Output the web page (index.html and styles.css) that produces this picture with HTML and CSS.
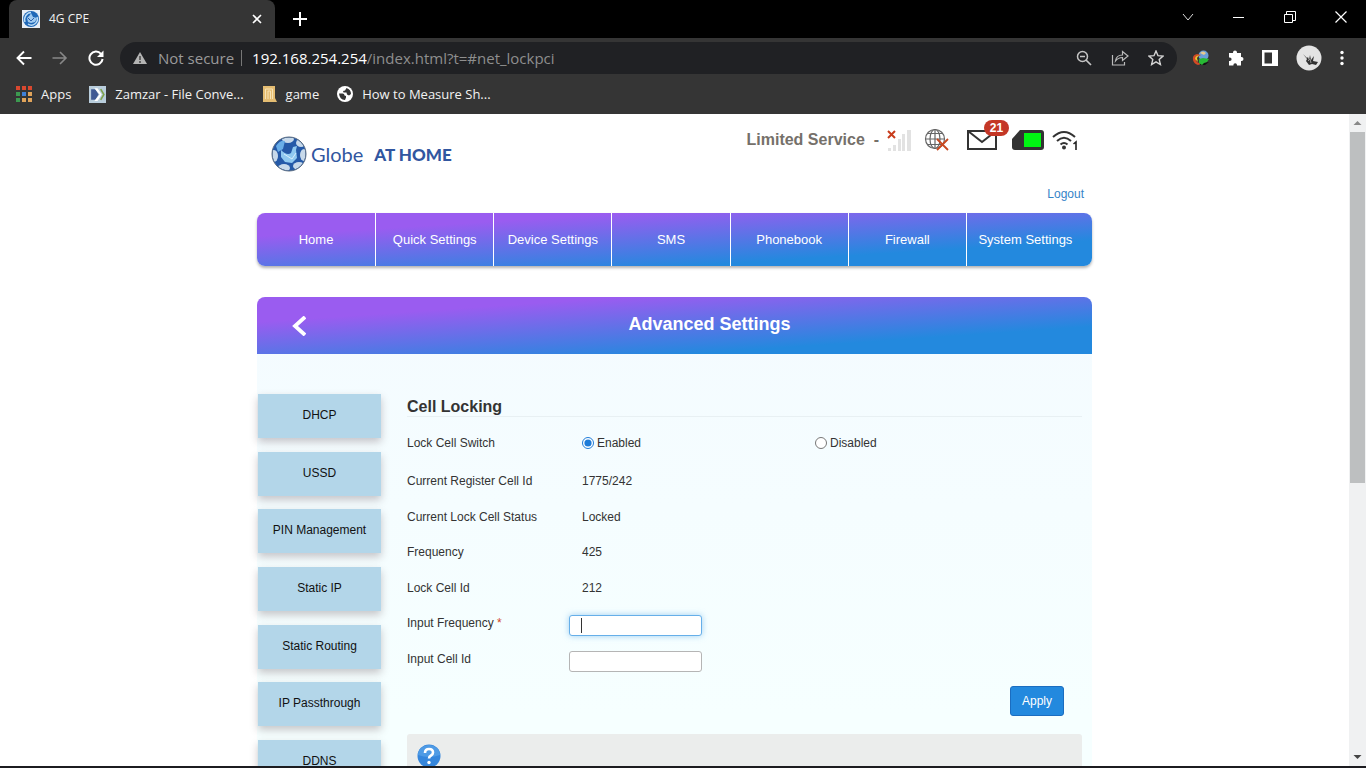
FILE: index.html
```
<!DOCTYPE html>
<html lang="en">
<head>
<meta charset="utf-8">
<title>4G CPE</title>
<link rel="stylesheet" href="styles.css">
</head>
<body>
<header class="browser">
  <div class="tabstrip">
    <div class="tab">
      <svg class="favicon" viewBox="0 0 18 18" width="18" height="18"><path fill="#e8eef5" d="M0 0h18v18H0z"/><circle cx="9" cy="9" r="8" fill="#1f68b8"/><path d="M3 12A7 7 0 0 1 9 2.500M15 7a6 6 0 0 1-9 7" fill="none" stroke="#bcdcf5" stroke-width="1.500"/><path fill="#9fc9ef" d="M5 8l3-3 1-2 2 4 4 1-2 4-4 1-3-1z"/><path d="M6 8l3 3 3-3" stroke="#2c5fa8" fill="none"/></svg>
      <span class="tab-title">4G CPE</span>
      <button class="plain" aria-label="Close tab"><svg viewBox="0 0 12 12" width="12" height="12"><path d="M2 2l8 8M10 2l-8 8" stroke="#fff" stroke-width="1.600"/></svg></button>
    </div>
    <button class="plain new-tab" aria-label="New tab"><svg viewBox="0 0 14 14" width="14" height="14"><path d="M7 0v14M0 7h14" stroke="#fff" stroke-width="2"/></svg></button>
    <div class="window-buttons">
      <button class="plain" aria-label="Search tabs"><svg viewBox="0 0 12 12" width="12" height="12"><path d="M1 3l5 6 5-6" fill="none" stroke="#ddd"/></svg></button>
      <button class="plain" aria-label="Minimize"><svg viewBox="0 0 12 12" width="12" height="12"><path d="M0 6.500h11" stroke="#fff"/></svg></button>
      <button class="plain" aria-label="Restore"><svg viewBox="0 0 12 12" width="12" height="12"><path d="M.5 3.500h8v8h-8zM2.500 3V.5h9v9H9" fill="none" stroke="#fff"/></svg></button>
      <button class="plain" aria-label="Close"><svg viewBox="0 0 12 12" width="12" height="12"><path d="M.5.5l11 11M11.500.5l-11 11" stroke="#fff" stroke-width="1.200"/></svg></button>
    </div>
  </div>
  <div class="toolbar">
    <div class="nav-buttons">
      <button class="plain" aria-label="Back"><svg viewBox="0 0 16 16" width="16" height="16"><path d="M15.500 8H2M8 1.500L1.500 8 8 14.500" fill="none" stroke="#fff" stroke-width="1.900"/></svg></button>
      <button class="plain" aria-label="Forward"><svg viewBox="0 0 16 16" width="16" height="16"><path d="M.5 8H14M8 2l6 6-6 6" fill="none" stroke="#888" stroke-width="1.600"/></svg></button>
      <button class="plain" aria-label="Reload"><svg viewBox="0 0 16 16" width="16" height="16"><path d="M13 3.800A6.600 6.600 0 1 0 14.600 9" fill="none" stroke="#fff" stroke-width="2"/><path d="M15.500.5V7H9z" fill="#fff"/></svg></button>
    </div>
    <div class="omnibox">
      <svg viewBox="0 0 14 12" width="14" height="12"><path d="M7 0l7 12H0z" fill="#b4b4b4"/><path d="M7 4v4M7 9v2" stroke="#333" stroke-width="1.300"/></svg>
      <span class="not-secure">Not secure</span>
      <div class="url" role="textbox" aria-label="Address" tabindex="0"><span class="host">192.168.254.254</span>/index.html?t=#net_lockpci</div>
      <div class="omni-actions">
        <button class="plain" aria-label="Zoom"><svg viewBox="0 0 16 16" width="16" height="16"><circle cx="6.500" cy="6.500" r="5" fill="none" stroke="#c4c4c4" stroke-width="1.500"/><path d="M4 6.500h5M10 10l5 5" stroke="#c4c4c4" stroke-width="1.700"/></svg></button>
        <button class="plain" aria-label="Share"><svg viewBox="0 0 18 16" width="18" height="16"><path d="M1.500 5v10h12v-3M4.500 11c.5-4 3-6 7-6V1.500L17 6l-5.500 4.500V7.500c-3 0-5 1-7 3.500z" fill="none" stroke="#bbb" stroke-width="1.200"/></svg></button>
        <button class="plain" aria-label="Bookmark"><svg viewBox="0 0 16 16" width="16" height="16"><path d="M8 1l2 4.700 5 .4-3.800 3.400 1.200 5L8 11.800 3.600 14.500l1.200-5L1 6.100l5-.4z" fill="none" stroke="#d4d4d4" stroke-width="1.400"/></svg></button>
      </div>
    </div>
    <div class="extensions">
      <button class="plain" aria-label="Download manager"><svg viewBox="0 0 18 16" width="18" height="16"><circle cx="11.500" cy="5.500" r="5" fill="#6b9fd8"/><path d="M8 3q3-3 6 0l-2 2z" fill="#e8c98f"/><path d="M1 10q-1-5 4-6l4 1-4 2q-2 2 0 5l4 2-3 1q-4-1-5-5z" fill="#d34a25"/><path d="M3 9q0-3 4-4l-2 3 1 4z" fill="#e9c52d"/><path d="M9 13l8-1-4 3H8z" fill="#111"/><path d="M7 9l4-1 6 1-2 3-3 1-2 2-3-2z" fill="#27b934"/></svg></button>
      <button class="plain" aria-label="Extensions"><svg viewBox="0 0 16 16" width="16" height="16"><path d="M1 3h4V2.500a2 2 0 0 1 4 0V3h4v4h.5a2 2 0 0 1 0 4H13v4.500H9V15a1.800 1.800 0 0 0-3.600 0v.5H1V11h.8a1.800 1.800 0 0 0 0-3.600H1z" fill="#fff"/></svg></button>
      <button class="plain" aria-label="Side panel"><svg viewBox="0 0 16 16" width="16" height="16"><path fill="#fff" d="M0 0h16v16H0z"/><path fill="#333" d="M2.500 2.500H10v11H2.500z"/></svg></button>
      <button class="plain" aria-label="Profile"><svg viewBox="0 0 26 26" width="26" height="26"><circle cx="13" cy="13" r="12.500" fill="#e4e4e4"/><path d="M7 9l4 4 1-1 1 3 1-5 1 5 3-4-1 5 5 1-2 3-4-1-3 1-3-4 1-2z" fill="#333"/><path d="M12 16l2-2 1 4" stroke="#999" fill="none"/></svg></button>
      <button class="plain" aria-label="Menu"><svg viewBox="0 0 4 16" width="4" height="16"><g fill="#fff"><circle cx="2" cy="2.500" r="1.700"/><circle cx="2" cy="8" r="1.700"/><circle cx="2" cy="13.500" r="1.700"/></g></svg></button>
    </div>
  </div>
  <nav class="bookmarks" aria-label="Bookmarks">
    <a href="#"><svg viewBox="0 0 16 16" width="16" height="16"><path fill="#d9482f" d="M0 0h4v4H0zM6 0h4v4H6zM12 0h4v4h-4z"/><path fill="#3c9a50" d="M0 6h4v4H0zM0 12h4v4H0z"/><path fill="#3f80d8" d="M6 6h4v4H6z"/><path fill="#e0a35a" d="M12 6h4v4h-4zM6 12h4v4H6zM12 12h4v4h-4z"/></svg>Apps</a>
    <a href="#"><svg viewBox="0 0 16 16" width="17" height="17"><path fill="#b9cddc" d="M0 0h16v16H0z"/><path d="M2 3h4l3 5-3 5H2z" fill="#3f5a94"/><path d="M5 2l5 6-5 6h3l4-6-4-6z" fill="#fff"/><path d="M11 3l3 5-3 5" fill="none" stroke="#7fa34c" stroke-width="1.500"/></svg>Zamzar - File Conve...</a>
    <a href="#"><svg viewBox="0 0 15 16" width="15" height="16"><path fill="#e5bd72" d="M1 0h12v12l2 4H1z"/><path d="M3.500 13V3h7v10M6 13V5h2.500v8" fill="none" stroke="#f7e3b5"/></svg>game</a>
    <a href="#"><svg viewBox="0 0 16 16" width="16" height="16"><circle cx="8" cy="8" r="8" fill="#fff"/><path d="M2 7.500h3.500q2 0 2 2l1.500.5v1.500L8 14q-5.500-.5-6-6.500zM9.500 2q4.500 1.500 4.500 6l-2 1.500-2-1-.5-2H6.500L6 5l2-.5z" fill="#353535"/></svg>How to Measure Sh...</a>
  </nav>
</header>

<div class="viewport">
  <div class="page">
    <div class="container">
      <div class="masthead">
        <div class="brand">
          <svg viewBox="0 0 36 36" width="36" height="36"><defs><clipPath id="ball"><circle cx="18" cy="18" r="16.500"/></clipPath></defs><circle cx="18" cy="18" r="17" fill="#2459a8"/><g clip-path="url(#ball)"><g fill="#c7d9ea"><ellipse cx="17" cy="3" rx="6" ry="4"/><ellipse cx="30" cy="7" rx="5" ry="4"/><ellipse cx="33" cy="19" rx="4" ry="6"/><ellipse cx="28" cy="30" rx="6" ry="4"/><ellipse cx="13" cy="32" rx="6" ry="4"/><ellipse cx="3" cy="20" rx="4" ry="6"/></g><path d="M5 10q4-6 9-5l-2 8-5 3z" fill="#69aee8"/><path d="M10 14q6 6 10 3l2-6 4-1-1 4 1 8-5 5-7-1-4-5z" fill="#8fc9f1"/><path d="M13 18l8 5 4-6" fill="none" stroke="#d9effb"/></g><circle cx="18" cy="18" r="17" fill="none" stroke="#596b80"/></svg>
          <span class="brand-name">Globe</span><span class="brand-sub">AT HOME</span>
        </div>
        <div class="status">
          <div class="status-row">
            <span class="service">Limited Service &nbsp;-</span>
            <svg viewBox="0 0 24 24" width="24" height="24" role="img" aria-label="No signal"><path d="M1 3l7 7M8 3l-7 7" stroke="#c83c1c" stroke-width="2"/><path d="M1 20h3v3H1zM6 17h3v6H6zM11 11h3v12h-3zM15 6h3v17h-3zM20 2h4v21h-4z" fill="#e2e2e2"/></svg>
            <svg class="globe" viewBox="0 0 26 24" width="26" height="24" role="img" aria-label="Disconnected"><g fill="none" stroke="#666" stroke-width="1.200"><circle cx="11" cy="11" r="9.500"/><ellipse cx="11" cy="11" rx="5" ry="9.500"/><path d="M11 1v20M1 11h20M3 5.500h16M3 16.500h16"/></g><path d="M13 11l11 11M24 11L13 22" stroke="#c8481f" stroke-width="1.800"/></svg>
            <span class="mail"><svg viewBox="0 0 30 20" width="30" height="20" role="img" aria-label="Messages"><path d="M1 1h28v18H1zM1 1l14 11L29 1" fill="#fff" stroke="#333" stroke-width="2"/></svg><span class="badge">21</span></span>
            <svg class="sim" viewBox="0 0 32 20" width="32" height="20" role="img" aria-label="SIM card"><path d="M8 0h21q3 0 3 3v14q0 3-3 3H3q-3 0-3-3V9z" fill="#333"/><path fill="#00f613" d="M12 3h17v14H12z"/></svg>
            <svg viewBox="0 0 26 20" width="26" height="20" role="img" aria-label="WiFi, 1 device"><path d="M1 7q11-10 22 0M5 11q7-6.500 14 0M8.500 14.500q3.500-3 7 0" fill="none" stroke="#333" stroke-width="2"/><circle cx="12" cy="17.500" r="2" fill="#333"/><path d="M21.500 14l2.500-2v8" fill="none" stroke="#222" stroke-width="1.600"/></svg>
          </div>
          <a class="logout" href="#">Logout</a>
        </div>
      </div>
      <nav class="mainnav" aria-label="Main">
        <a href="#">Home</a><a href="#">Quick Settings</a><a href="#">Device Settings</a><a href="#">SMS</a><a href="#">Phonebook</a><a href="#">Firewall</a><a href="#">System Settings</a>
      </nav>
      <main class="panel">
        <div class="panel-head">
          <button class="plain back" aria-label="Back"><svg viewBox="0 0 14 20" width="14" height="20"><path d="M13 1L3 10l10 9" fill="none" stroke="#fff" stroke-width="3.800"/></svg></button>
          <h1>Advanced Settings</h1>
        </div>
        <div class="panel-body">
          <nav class="side" aria-label="Advanced settings">
            <a href="#">DHCP</a><a href="#">USSD</a><a href="#">PIN Management</a><a href="#">Static IP</a><a href="#">Static Routing</a><a href="#">IP Passthrough</a><a href="#">DDNS</a>
          </nav>
          <form class="content">
            <h2>Cell Locking</h2>
            <div class="switch" role="radiogroup" aria-labelledby="switch-name">
              <span id="switch-name">Lock Cell Switch</span>
              <label><input type="radio" name="lock" checked>Enabled</label>
              <label><input type="radio" name="lock">Disabled</label>
            </div>
            <div class="rows">
              <div class="row"><span>Current Register Cell Id</span><span>1775/242</span></div>
              <div class="row"><span>Current Lock Cell Status</span><span>Locked</span></div>
              <div class="row"><span>Frequency</span><span>425</span></div>
              <div class="row"><span>Lock Cell Id</span><span>212</span></div>
              <div class="row"><label for="freq">Input Frequency <span class="required">*</span></label><span class="field focused"><input id="freq" type="text"></span></div>
              <div class="row"><label for="cell">Input Cell Id</label><span class="field"><input id="cell" type="text"></span></div>
            </div>
            <div class="actions"><button class="apply" type="button">Apply</button></div>
            <div class="help"><svg viewBox="0 0 24 24" width="24" height="24" role="img" aria-label="Help"><circle cx="12" cy="12" r="11.500" fill="#3586dc"/><path d="M1 11a11 10 0 0 1 22 0q-11 4-22 0z" fill="#4f9be5"/><path d="M8 9q0-4 4-4t4 3.500q0 2-2 3t-2 3" fill="none" stroke="#fff" stroke-width="2.600"/><circle cx="12" cy="18.500" r="1.700" fill="#fff"/></svg></div>
          </form>
        </div>
      </main>
    </div>
  </div>
  <div class="scrollbar" aria-hidden="true">
    <svg viewBox="0 0 17 17" width="17" height="17"><path d="M4.500 11l4-4 4 4z" fill="#888"/></svg>
    <div class="track"><div class="thumb"></div></div>
    <svg viewBox="0 0 17 17" width="17" height="17"><path d="M4.500 6l4 4 4-4z" fill="#444"/></svg>
  </div>
</div>
<div class="taskbar"></div>
</body>
</html>
```

FILE: styles.css
```
* { box-sizing: border-box; }
body {
  margin: 0;
  height: 100vh;
  display: flex;
  flex-direction: column;
  overflow: hidden;
  background: #fff;
  color: #333;
  font: 12px/16px "Liberation Sans", Arial, sans-serif;
}
svg { display: block; flex: none; }
a { text-decoration: none; color: inherit; }
.plain {
  display: flex;
  align-items: center;
  justify-content: center;
  border: 0;
  padding: 0;
  background: none;
}

/* Browser frame */
.browser {
  flex: none;
  background: #353535;
  color: #f2f2f2;
  font-family: "Open Sans", "Noto Sans", sans-serif;
}
.tabstrip { display: flex; height: 38px; background: #000; }
.tab {
  display: flex;
  align-items: center;
  width: 266px;
  margin-left: 9px;
  padding: 0 12px 0 13px;
  border-radius: 8px 8px 0 0;
  background: #353535;
}
.tab-title { flex: 1; margin-left: 9px; }
.new-tab { margin-left: 18px; }
.window-buttons {
  display: flex;
  gap: 39px;
  margin-left: auto;
  padding: 0 19px 5px 0;
}
.toolbar { display: flex; align-items: center; height: 40px; padding-right: 22px; }
.nav-buttons { display: flex; gap: 20px; width: 120px; padding-left: 16px; }
.omnibox {
  display: flex;
  flex: 1;
  align-items: center;
  height: 32px;
  padding: 0 13px;
  border-radius: 16px;
  background: #202124;
  font-size: 15px;
  line-height: 20px;
}
.not-secure {
  margin-left: 11px;
  padding-right: 7px;
  border-right: 1px solid #777;
  color: #9a9a9a;
  line-height: 16px;
}
.url { flex: 1; margin-left: 10px; color: #8e8e8e; }
.host { color: #fff; }
.omni-actions { display: flex; gap: 19px; }
.extensions { display: flex; align-items: center; gap: 18px; margin-left: 15px; }
.bookmarks {
  display: flex;
  gap: 18px;
  height: 36px;
  padding: 0 16px 4px;
  font-size: 13px;
}
.bookmarks a { display: flex; align-items: center; gap: 9px; }

/* Page area */
.viewport { display: flex; flex: 1; min-height: 0; }
.page { flex: 1; overflow: hidden; }
.container { max-width: 835px; margin: 0 auto; }
.taskbar { flex: none; height: 2px; background: #1c1c20; }

.masthead { display: flex; justify-content: space-between; height: 99px; padding: 14px 8px 11px 14px; }
.brand { display: flex; align-items: center; height: 52px; color: #3156a0; }
.brand-name { margin-left: 4px; font: 20px/24px Lato, sans-serif; }
.brand-sub { margin-left: 11px; padding-top: 2px; font: 900 17px/24px Lato, sans-serif; }
.status { display: flex; flex-direction: column; justify-content: space-between; align-items: flex-end; }
.status-row { display: flex; align-items: center; height: 24px; padding-right: 6px; }
.service { margin-right: 8px; color: #75706a; font-size: 16px; font-weight: bold; }
.globe { margin: 0 17px 0 13px; }
.mail { position: relative; margin-right: 15px; }
.sim { margin-right: 8px; }
.badge {
  position: absolute;
  top: -10px;
  left: 17px;
  width: 25px;
  border-radius: 8px;
  background: #c43726;
  color: #fff;
  font-weight: bold;
  line-height: 16px;
  text-align: center;
}
.logout { color: #3584c8; }

.mainnav, .panel-head {
  background: linear-gradient(to bottom right, #9a5cf0 22%, #2389de 76%);
}
.mainnav {
  display: grid;
  grid-template-columns: repeat(6, 118fr) 126fr;
  height: 53px;
  border-radius: 8px;
  box-shadow: 0 2px 3px rgba(0, 0, 0, .3);
  color: #fff;
  font-size: 13px;
  line-height: 53px;
  text-align: center;
}
.mainnav a + a { border-left: 1px solid #fff; }
.mainnav a:last-child { padding-right: 8px; }

.panel { margin-top: 31px; background: linear-gradient(#f4fbff, #f6ffff 420px); }
.panel, .panel-head { border-radius: 8px 8px 0 0; }
.panel-head {
  display: grid;
  grid-template-columns: 84px 1fr 14px;
  align-items: center;
  height: 57px;
}
.panel-head h1 {
  margin: 0;
  padding: 0 0 4px;
  color: #fff;
  font-size: 18px;
  line-height: 22px;
  text-align: center;
}
.panel-body {
  display: grid;
  grid-template-columns: 123px 1fr;
  align-items: start;
  gap: 26px;
  padding: 40px 10px 40px 1px;
}
.side { display: flex; flex-direction: column; justify-content: space-between; min-height: 390px; }
.side a {
  height: 44px;
  background: #b3d6e9;
  box-shadow: 0 4px 8px rgba(60, 30, 40, .25);
  color: #111;
  line-height: 42px;
  text-align: center;
}
.content h2 {
  margin: 0;
  padding: 4px 0 0;
  border-bottom: 1px solid #e8f0f3;
  font-size: 16px;
  line-height: 18px;
}
.switch {
  display: grid;
  grid-template-columns: 175px 233px 1fr;
  align-items: center;
  height: 46px;
  padding-top: 6px;
}
.switch label { display: flex; align-items: center; }
.switch input { width: 12px; height: 12px; margin: 0 3px 0 0; accent-color: #1d7bd8; }
.rows { display: grid; grid-auto-rows: 1fr; min-height: 213px; }
.row { display: grid; grid-template-columns: 175px 1fr; padding-top: 10px; }
.required { color: #d2451e; }
.field { position: relative; height: 21px; margin-left: -13px; }
.field input {
  width: 133px;
  height: 21px;
  padding: 0 12px;
  border: 1px solid #b5b5b5;
  border-radius: 3px;
  background: #fff;
  font: inherit;
}
.focused input { border-color: #66afe9; box-shadow: 0 0 6px rgba(102, 175, 233, .6); }
.focused::after {
  content: "";
  position: absolute;
  top: 3px;
  left: 12px;
  width: 1px;
  height: 15px;
  background: #333;
}
.actions { display: flex; justify-content: flex-end; padding: 10px 18px 18px; }
.apply {
  width: 54px;
  height: 30px;
  border: 1px solid #1b6dc0;
  border-radius: 3px;
  background: #2389de;
  color: #fff;
  font: inherit;
}
.help { min-height: 120px; padding: 10px; border-radius: 3px; background: #ebedec; }

/* Scrollbar */
.scrollbar { display: flex; flex-direction: column; width: 17px; background: #f0f1f2; }
.track { flex: 1; padding: 1px; }
.thumb { height: 57%; background: #bdbfc0; }
```
